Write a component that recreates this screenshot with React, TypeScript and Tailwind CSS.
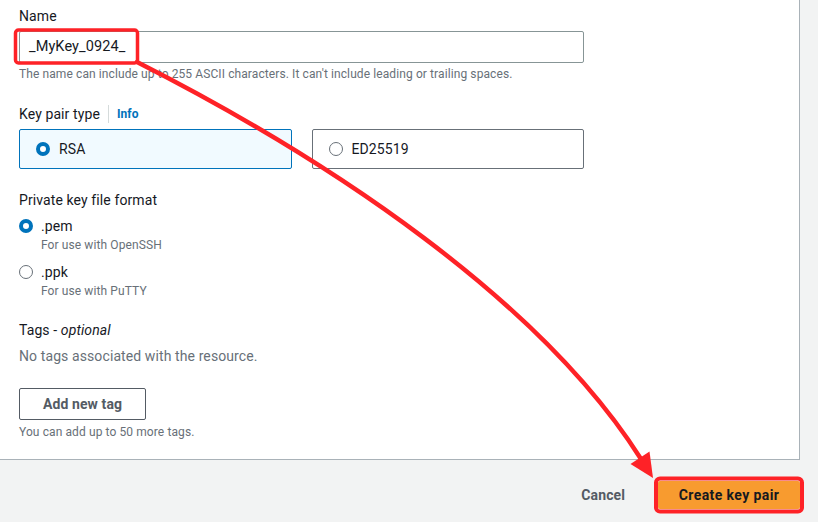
import React from 'react';

const Radio: React.FC<{ checked?: boolean }> = ({ checked }) =>
  checked ? (
    <span className="inline-block w-[14px] h-[14px] rounded-full border-[4px] border-[#0073bb] bg-white shrink-0" />
  ) : (
    <span className="inline-block w-[14px] h-[14px] rounded-full border-[1.5px] border-[#687078] bg-white shrink-0" />
  );

const App: React.FC = () => {
  return (
    <div
      className="relative w-[818px] h-[522px] overflow-hidden bg-[#f2f3f3] text-[#16191f] tracking-[0.1px]"
      style={{ fontFamily: 'Roboto, "Open Sans", sans-serif' }}
    >
      {/* form panel */}
      <div className="w-[800px] h-[460px] bg-white border-r border-b border-[#a9b2b8] pl-[19px] pt-[5px]">
        <div className="text-[14px] leading-[22px]">Name</div>
        <div className="mt-[4px] w-[565px] h-[32px] border border-[#879596] rounded-[2px] flex items-center pl-[9px] text-[14.5px]">
          _MyKey_0924_
        </div>
        <div className="mt-[3px] text-[12px] leading-[16px] text-[#687078]">
          The name can include up to 255 ASCII characters. It can't include leading or trailing spaces.
        </div>

        <div className="mt-[21px] flex items-center h-[22px] text-[14px]">
          <span>Key pair type</span>
          <span className="mx-[8px] w-px h-[18px] bg-[#d5dbdb]" />
          <span className="text-[12px] font-bold text-[#0073bb]">Info</span>
        </div>
        <div className="mt-[4px] w-[565px] grid grid-cols-2 gap-[20px]">
          <div className="h-[40px] rounded-[2px] border border-[#0073bb] bg-[#f1faff] flex items-center gap-[9px] pl-[16px] text-[14px]">
            <Radio checked />
            <span>RSA</span>
          </div>
          <div className="h-[40px] rounded-[2px] border border-[#687078] bg-white flex items-center gap-[9px] pl-[16px] text-[14px]">
            <Radio />
            <span>ED25519</span>
          </div>
        </div>

        <div className="mt-[20px] text-[14px] leading-[22px]">Private key file format</div>
        <div className="mt-[4px] flex items-start gap-[8px]">
          <div className="h-[22px] flex items-center">
            <Radio checked />
          </div>
          <div>
            <div className="text-[14px] leading-[22px]">.pem</div>
            <div className="text-[12px] leading-[16px] text-[#687078]">For use with OpenSSH</div>
          </div>
        </div>
        <div className="mt-[8px] flex items-start gap-[8px]">
          <div className="h-[22px] flex items-center">
            <Radio />
          </div>
          <div>
            <div className="text-[14px] leading-[22px]">.ppk</div>
            <div className="text-[12px] leading-[16px] text-[#687078]">For use with PuTTY</div>
          </div>
        </div>

        <div className="mt-[20px] text-[14px] leading-[22px]">
          Tags - <i>optional</i>
        </div>
        <div className="mt-[4px] text-[14px] leading-[22px] text-[#687078]">
          No tags associated with the resource.
        </div>
        <button className="mt-[21px] h-[32px] w-[127px] border border-[#545b64] rounded-[2px] text-[14px] font-bold text-[#545b64] bg-white">
          Add new tag
        </button>
        <div className="mt-[4px] text-[12px] leading-[16px] text-[#687078]">
          You can add up to 50 more tags.
        </div>
      </div>

      {/* footer actions */}
      <div className="flex justify-end items-center pr-[18px] pt-[21px] gap-[14px]">
        <button className="px-[19px] h-[28px] text-[14px] font-bold text-[#545b64]">Cancel</button>
        <button className="w-[142px] h-[28px] bg-[#f89b2f] text-[14px] font-bold text-[#16191f] rounded-[2px] tracking-[0.4px]">
          Create key pair
        </button>
      </div>

      {/* annotation overlay */}
      <svg className="absolute inset-0 pointer-events-none" width="818" height="522" viewBox="0 0 818 522">
        <rect x="15.5" y="30" width="122" height="33" rx="3" fill="none" stroke="#fe2227" strokeWidth="3.5" />
        <rect x="656" y="478.5" width="146" height="33" rx="4" fill="none" stroke="#fe2227" strokeWidth="4" />
        <path d="M137 62 C 330 160, 540 300, 641 459" fill="none" stroke="#fe2227" strokeWidth="4.5" strokeLinecap="round" />
        <polygon points="653,478 630.5,464 649.5,451.5" fill="#fe2227" />
      </svg>
    </div>
  );
};

export default App;
